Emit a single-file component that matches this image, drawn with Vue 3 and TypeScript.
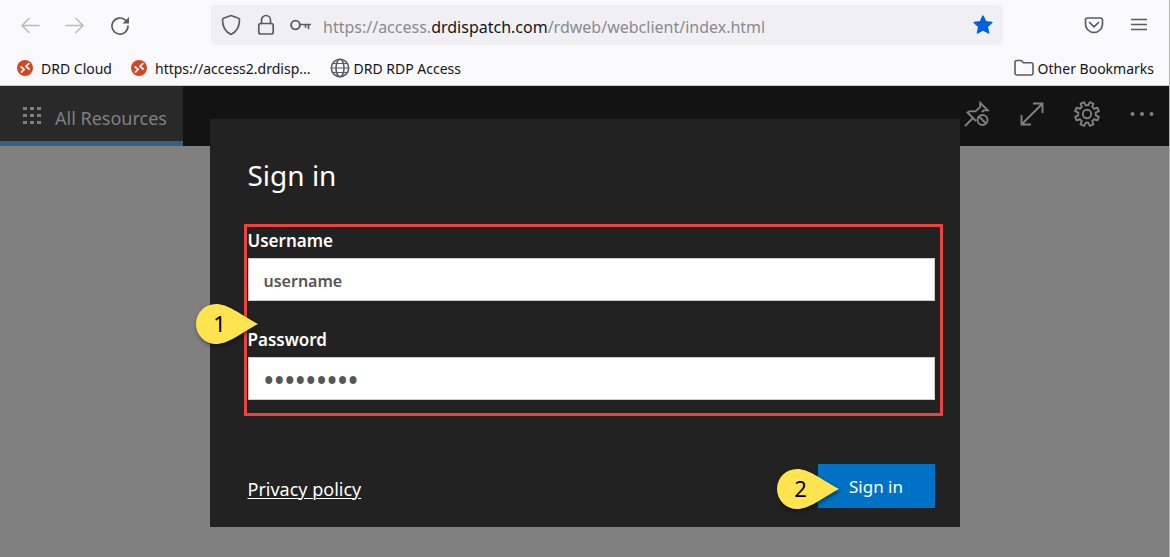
<script setup lang="ts">
import { ref } from 'vue'

const address = {
  prefix: 'https://access.',
  domain: 'drdispatch.com',
  path: '/rdweb/webclient/index.html',
}

const username = ref('username')
const password = ref('password1')

const gridDots = [0, 7, 14]

const gearPoints = (): string => {
  const parts: string[] = []
  const teeth = 8
  const at = (radius: number, degrees: number): string => {
    const angle = (degrees * Math.PI) / 180
    return `${(13 + radius * Math.cos(angle)).toFixed(2)} ${(13 + radius * Math.sin(angle)).toFixed(2)}`
  }
  for (let i = 0; i < teeth; i++) {
    const a = (i * 360) / teeth + 22.5
    parts.push(at(8.8, a - 14), at(12.2, a - 9), at(12.2, a + 9), at(8.8, a + 14))
  }
  return `M${parts.join('L')}Z`
}
</script>

<template>
  <div class="browser">
    <header class="chrome">
      <div class="toolbar">
        <nav class="history" aria-label="History">
          <button type="button" class="icon-button faded" aria-label="Back">
            <svg width="20" height="20" viewBox="0 0 20 20"><path d="M19 10.500H2M9 3.500l-7 7 7 7" /></svg>
          </button>
          <button type="button" class="icon-button faded" aria-label="Forward">
            <svg width="20" height="20" viewBox="0 0 20 20"><path d="M1 10.500h17M11 3.500l7 7-7 7" /></svg>
          </button>
          <button type="button" class="icon-button" aria-label="Reload">
            <svg width="20" height="20" viewBox="0 0 20 20">
              <path d="M18 11a8 8 0 1 1-2.600-5.900" stroke-width="1.700" />
              <path d="M19 2v6.500h-6.500z" fill="#5b5b66" stroke="none" />
            </svg>
          </button>
        </nav>
        <div class="address-bar">
          <svg width="20" height="22" viewBox="0 0 20 22">
            <path d="M10 1.500L17.500 4.300q1 .4 1 1.500C18.500 13 15.500 18 10 20.500 4.500 18 1.500 13 1.500 5.800q0-1.100 1-1.500z" stroke-width="1.700" />
          </svg>
          <svg width="20" height="22" viewBox="0 0 20 22">
            <rect x="3.800" y="9.500" width="14.400" height="10.500" rx="2" stroke-width="1.700" />
            <path d="M6.500 9.500V6a4.500 4.500 0 0 1 9 0v3.500" stroke-width="1.700" />
          </svg>
          <svg width="22" height="20" viewBox="0 0 22 20">
            <circle cx="6.500" cy="10" r="4.400" stroke-width="1.900" />
            <path d="M11 9.500h10.500M19.500 9.500v4M16.500 9.500V12" stroke-width="1.700" />
          </svg>
          <span class="url">{{ address.prefix }}<b>{{ address.domain }}</b>{{ address.path }}</span>
          <button type="button" class="icon-button star" aria-label="Edit bookmark">
            <svg width="20" height="20" viewBox="0 0 20 20">
              <path d="M10 1.200l2.600 5.600 6.200.7-4.600 4.200 1.300 6.200-5.500-3.100-5.500 3.100 1.300-6.200L1.200 7.500l6.200-.7z" fill="#0060df" stroke="#0060df" />
            </svg>
          </button>
        </div>
        <div class="tools">
          <button type="button" class="icon-button" aria-label="Save to Pocket">
            <svg width="20" height="20" viewBox="0 0 20 20">
              <path d="M3.500 3h13q2 0 2 2v4a8.500 8.500 0 0 1-17 0V5q0-2 2-2zM5.500 7.500L10 11.800l4.500-4.300" stroke-width="1.700" />
            </svg>
          </button>
          <button type="button" class="icon-button" aria-label="Menu">
            <svg width="16" height="20" viewBox="0 0 16 20"><path d="M.5 4.500h15M.5 9.500h15M.5 14.500h15" /></svg>
          </button>
        </div>
      </div>
      <nav class="bookmarks" aria-label="Bookmarks">
        <a v-for="name in ['DRD Cloud', 'https://access2.drdisp...']" :key="name" href="#" class="bookmark">
          <svg class="favicon" width="16" height="16" viewBox="0 0 16 16">
            <circle cx="8" cy="8" r="8" fill="#d24726" stroke="none" />
            <path d="M4.200 7l3 2.500-2.800 2.700M11.800 3.600L9 6.300l3 2.700" stroke="#fff" stroke-width="1.700" />
          </svg>
          <span>{{ name }}</span>
        </a>
        <a href="#" class="bookmark globe">
          <svg width="20" height="20" viewBox="0 0 20 20">
            <circle cx="10" cy="10" r="8.700" />
            <ellipse cx="10" cy="10" rx="4" ry="8.700" />
            <path d="M1.300 10h17.400M3 5.500h14M3 14.500h14" stroke-width="1.200" />
          </svg>
          <span>DRD RDP Access</span>
        </a>
        <a href="#" class="bookmark other">
          <svg width="20" height="18" viewBox="0 0 20 18">
            <path d="M3 1.500h3.800q.8 0 1.400.8l1.100 1.400H17q2 0 2 2V14q0 2-2 2H3q-2 0-2-2V3.500q0-2 2-2z" />
          </svg>
          <span>Other Bookmarks</span>
        </a>
      </nav>
    </header>

    <main class="page">
      <div class="app-bar">
        <a href="#" class="tab">
          <svg width="18" height="17" viewBox="0 0 18 17">
            <template v-for="y in gridDots" :key="y">
              <rect v-for="x in gridDots" :key="x" :x="x" :y="y" width="4" height="3" />
            </template>
          </svg>
          <span>All Resources</span>
        </a>
        <div class="actions">
          <button type="button" aria-label="Unpin">
            <svg width="26" height="26" viewBox="0 0 26 26">
              <path d="M1 25l8-8M12 20L3.500 11.500l2.500-1.300 5.500.2 4.700-4.500V1.800l7.600 7.600h-4.100l-1.700 1.800" />
              <circle cx="18.500" cy="19" r="5" />
              <path d="M15 15.500l7 7" />
            </svg>
          </button>
          <button type="button" aria-label="Full screen">
            <svg width="26" height="26" viewBox="0 0 26 26"><path d="M2.500 23.500l21-21M14 2.500h9.500V12M2.500 14v9.500H12" /></svg>
          </button>
          <button type="button" aria-label="Settings">
            <svg width="26" height="26" viewBox="0 0 26 26">
              <path :d="gearPoints()" stroke-linejoin="round" />
              <circle cx="13" cy="13" r="4.200" />
            </svg>
          </button>
          <button type="button" aria-label="More">
            <svg width="26" height="26" viewBox="0 0 26 26">
              <g fill="#808080" stroke="none">
                <circle cx="3.500" cy="13" r="2" />
                <circle cx="13" cy="13" r="2" />
                <circle cx="22.500" cy="13" r="2" />
              </g>
            </svg>
          </button>
        </div>
      </div>

      <div class="overlay">
        <form class="dialog" @submit.prevent>
          <h1>Sign in</h1>
          <div class="fields">
            <label for="username">Username</label>
            <input id="username" v-model="username" type="text" autocomplete="off" />
            <label for="password">Password</label>
            <input id="password" v-model="password" type="password" autocomplete="off" />
            <div class="highlight"></div>
            <div class="callout first">
              <svg width="62" height="40" viewBox="0 0 62 40">
                <path d="M20 0C32 0 42 9 62 20 42 31 32 40 20 40A20 20 0 0 1 20 0z" />
              </svg>
              <span>1</span>
            </div>
          </div>
          <div class="footer">
            <a href="#">Privacy policy</a>
            <div class="submit">
              <button type="submit">Sign in</button>
              <div class="callout second">
                <svg width="62" height="40" viewBox="0 0 62 40">
                  <path d="M20 0C32 0 42 9 62 20 42 31 32 40 20 40A20 20 0 0 1 20 0z" />
                </svg>
                <span>2</span>
              </div>
            </div>
          </div>
        </form>
      </div>
    </main>
  </div>
</template>

<style>
body {
  margin: 0;
}
</style>

<style scoped>
.browser {
  box-sizing: border-box;
  min-height: 100vh;
  display: flex;
  flex-direction: column;
  border-right: 1px solid #b4b4b4;
  font-family: 'Noto Sans', 'Open Sans', sans-serif;
}

svg {
  display: block;
  flex: none;
  fill: none;
  stroke: #5b5b66;
  stroke-width: 1.600;
  stroke-linecap: round;
  stroke-linejoin: round;
}

button {
  padding: 0;
  border: 0;
  background: none;
  font-family: inherit;
}

.chrome {
  background: #f9f9fb;
  border-bottom: 1px solid #ccccce;
}

.toolbar {
  display: flex;
  align-items: center;
  height: 50px;
}

.history {
  box-sizing: border-box;
  width: 211px;
  display: flex;
  gap: 25px;
  padding-left: 20px;
}

.faded {
  opacity: 0.4;
}

.address-bar {
  flex: 1;
  min-width: 0;
  box-sizing: border-box;
  height: 40px;
  display: flex;
  align-items: center;
  gap: 14px;
  padding: 0 10px;
  border-radius: 4px;
  background: #f0f0f4;
}

.url {
  flex: 1;
  margin-left: -2px;
  padding-top: 4px;
  font-size: 16px;
  line-height: 24px;
  color: #8a8a90;
  white-space: nowrap;
}

.url b {
  font-weight: 400;
  color: #15141a;
}

.tools {
  box-sizing: border-box;
  width: 166px;
  display: flex;
  justify-content: flex-end;
  gap: 27px;
  padding-right: 22px;
}

.bookmarks {
  display: flex;
  align-items: center;
  gap: 19px;
  height: 35px;
  padding: 0 15px 0 17px;
}

.bookmark {
  display: flex;
  align-items: center;
  gap: 8px;
  font-size: 14px;
  line-height: 20px;
  color: #15141a;
  text-decoration: none;
  white-space: nowrap;
}

.bookmark span {
  padding-top: 2px;
}

.globe,
.other {
  gap: 4px;
}

.other {
  margin-left: auto;
}

.page {
  position: relative;
  flex: 1;
  background: #808080;
}

.app-bar {
  display: flex;
  justify-content: space-between;
  height: 60px;
  background: #131313;
}

.tab {
  box-sizing: border-box;
  display: flex;
  align-items: center;
  gap: 14px;
  padding: 4px 16px 0 23px;
  border-bottom: 5px solid #3a6080;
  background: #292929;
  font-size: 18px;
  color: #808080;
  text-decoration: none;
}

.tab span {
  padding-top: 4px;
}

.tab svg {
  fill: #808080;
  stroke: none;
}

.actions {
  display: flex;
  align-items: center;
  gap: 29px;
  padding: 0 14px 4px 0;
}

.actions svg {
  stroke: #808080;
  stroke-width: 1.900;
  stroke-linecap: butt;
  stroke-linejoin: miter;
}

.overlay {
  position: absolute;
  inset: 0;
  padding: 33px 0 30px;
}

.dialog {
  box-sizing: border-box;
  max-width: 750px;
  margin: 0 auto;
  padding: 36px 25px 19px 38px;
  background: #222;
  color: #fff;
}

h1 {
  margin: 0 0 34px;
  font-size: 28px;
  line-height: 40px;
  font-weight: 400;
}

.fields {
  position: relative;
  display: flex;
  flex-direction: column;
}

.fields label {
  font-size: 17px;
  line-height: 24px;
  font-weight: 600;
  margin-bottom: 5px;
}

.fields input {
  box-sizing: border-box;
  width: 100%;
  height: 43px;
  padding: 2px 15px 0;
  border: 1px solid #ccc;
  border-radius: 0;
  background: #fff;
  font-family: inherit;
  font-size: 16px;
  font-weight: 600;
  color: #555;
  outline: none;
}

.fields input[type='text'] {
  margin-bottom: 27px;
}

.fields input[type='password'] {
  font-family: 'Open Sans', sans-serif;
  font-size: 28px;
}

.highlight {
  position: absolute;
  inset: -5px -8px -16px -4px;
  border: 3px solid #ea4440;
  pointer-events: none;
}

.callout {
  position: absolute;
  width: 62px;
  height: 40px;
}

.callout svg {
  fill: #ffe44f;
  stroke: none;
  overflow: visible;
  filter: drop-shadow(1px 2px 2px rgba(0, 0, 0, 0.5));
}

.callout span {
  position: absolute;
  inset: 0 14px 0 0;
  text-align: center;
  font-size: 22px;
  line-height: 38px;
  color: #000;
}

.first {
  left: -52px;
  top: 75px;
}

.second {
  left: -41px;
  top: 5px;
}

.footer {
  display: flex;
  align-items: center;
  justify-content: space-between;
  margin-top: 64px;
}

.footer a {
  padding-top: 6px;
  font-size: 18px;
  line-height: 24px;
  color: #fff;
  text-decoration-thickness: 1px;
  text-underline-offset: 2px;
}

.submit {
  position: relative;
}

.submit button {
  width: 117px;
  height: 44px;
  background: #0072c6;
  font-size: 17px;
  color: #fff;
}
</style>
